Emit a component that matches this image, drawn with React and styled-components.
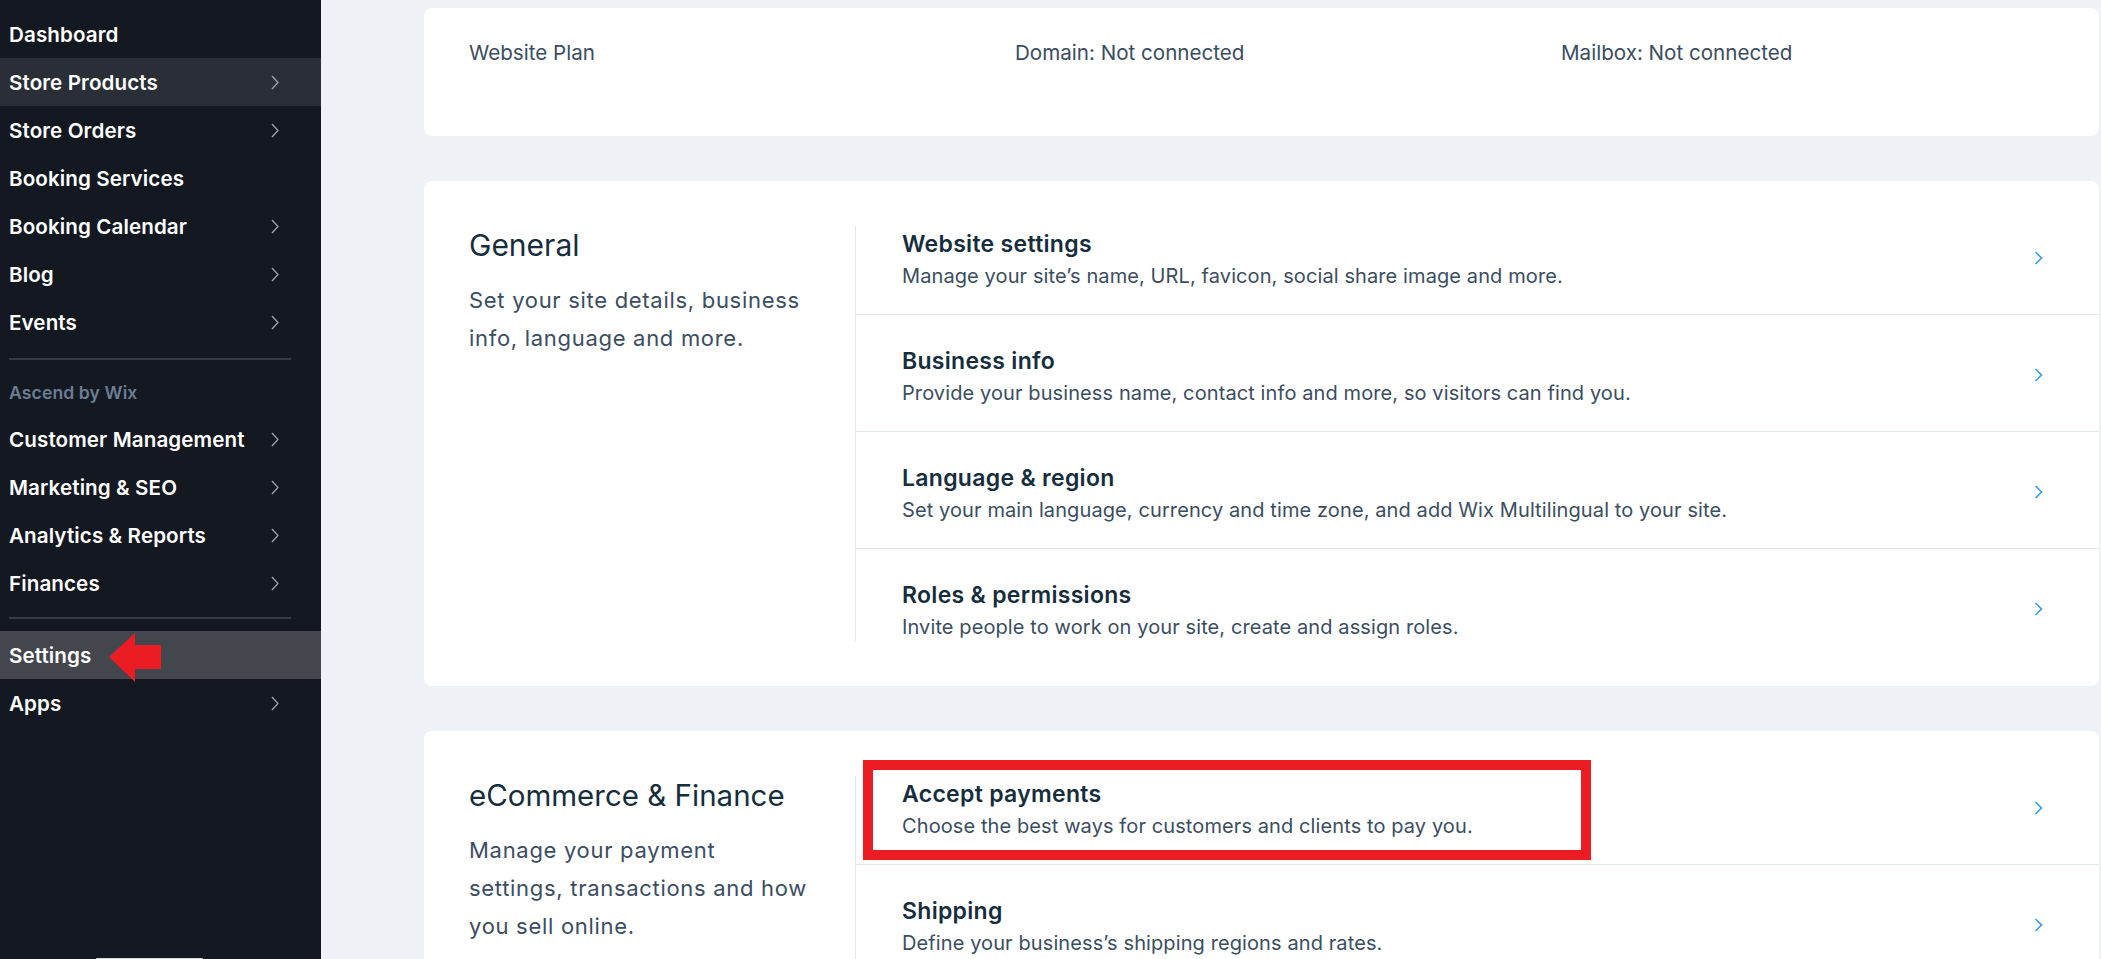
import React from "react";
import styled, { createGlobalStyle } from "styled-components";

const GlobalStyle = createGlobalStyle`
  html, body {
    margin: 0;
    padding: 0;
    height: 100%;
    overflow: hidden;
  }
  body {
    font-family: Inter, "Noto Sans", "Liberation Sans", sans-serif;
    -webkit-font-smoothing: antialiased;
  }
  #root {
    height: 100%;
  }
`;

const Page = styled.div`
  display: flex;
  height: 100vh;
  background-color: #eef2f6;
  overflow: hidden;
`;

const Sidebar = styled.nav`
  display: flex;
  flex-direction: column;
  flex: 0 0 321px;
  background-color: #141821;
  padding-top: 10px;
  box-sizing: border-box;
  overflow: hidden;
`;

const NavItem = styled.div`
  position: relative;
  display: flex;
  align-items: center;
  justify-content: space-between;
  height: 48px;
  padding: 0 42px 0 9px;
  color: #fff;
  font-size: 20.6px;
  letter-spacing: 0.1px;
  font-weight: 600;
  white-space: nowrap;
  background-color: ${(p) =>
    p.$selected ? "#43464d" : p.$hover ? "#2a2e37" : "transparent"};
`;

const NavDivider = styled.div`
  height: 2px;
  margin: ${(p) => p.$margin};
  width: 282px;
  margin-left: 9px;
  background-color: #363a43;
`;

const NavLabel = styled.div`
  padding: 20px 9px 9px;
  line-height: 26px;
  font-size: 17.6px;
  letter-spacing: 0.1px;
  font-weight: 600;
  color: #6b7e94;
`;

const BottomPill = styled.div`
  margin: auto 0 0 96px;
  width: 107px;
  height: 1px;
  border-radius: 6px 6px 0 0;
  background-color: #d9d9d9;
`;

const Arrow = styled.svg`
  position: absolute;
  left: 109px;
  top: 2px;
`;

const Main = styled.main`
  flex: 1;
  display: flex;
  flex-direction: column;
  gap: 45px;
  padding: 8px 2px 0 103px;
  min-width: 0;
`;

const PlanCard = styled.section`
  display: grid;
  grid-template-columns: 546px 546px 1fr;
  align-items: start;
  min-height: 128px;
  box-sizing: border-box;
  padding: 32px 45px;
  background-color: #fff;
  border-radius: 8px;
`;

const PlanText = styled.div`
  font-size: 20.6px;
  line-height: 26px;
  color: #3b4d60;
`;

const Card = styled.section`
  display: flex;
  flex-shrink: 0;
  padding: 45px 0 45px 45px;
  background-color: #fff;
  border-radius: 8px;
`;

const SectionInfo = styled.div`
  flex: 0 0 386px;
`;

const SectionTitle = styled.h2`
  margin: 0;
  font-size: ${(p) => p.$size || "30px"};
  line-height: 38px;
  font-weight: 400;
  color: #162d3d;
`;

const SectionText = styled.p`
  margin: 17px 0 0;
  font-size: 22px;
  letter-spacing: 0.7px;
  line-height: 38px;
  color: #3b4d60;
  white-space: nowrap;
`;

const RowList = styled.div`
  flex: 1;
  border-left: 1px solid #dfe5eb;
`;

const Row = styled.div`
  position: relative;
  display: flex;
  align-items: center;
  padding: 28px 0 24px 46px;
  border-bottom: 1px solid #dfe5eb;

  &:first-child {
    padding-top: 0;
  }
  &:last-child {
    padding-bottom: 0;
    border-bottom: none;
  }
`;

const RowText = styled.div`
  flex: 1;
`;

const RowTitle = styled.div`
  font-size: 23px;
  letter-spacing: 0.3px;
  line-height: 36px;
  font-weight: 600;
  color: #162d3d;
`;

const RowDesc = styled.div`
  font-size: 20px;
  letter-spacing: 0.1px;
  line-height: 28px;
  color: #3b4d60;
`;

const RowChevron = styled.svg`
  flex-shrink: 0;
  margin-right: 56px;
`;

const Highlight = styled.div`
  position: absolute;
  left: 7px;
  top: -16px;
  width: 728px;
  height: 100px;
  box-sizing: border-box;
  border: 10px solid #ec1c24;
  pointer-events: none;
`;

const NavChevron = () => (
  <svg width="8" height="15" viewBox="0 0 8 15">
    <path d="M1 1l6 6.5L1 14" fill="none" stroke="#9da1a9" strokeWidth="1.3" />
  </svg>
);

const BlueChevron = () => (
  <RowChevron width="9" height="14" viewBox="0 0 9 14">
    <path d="M1.5 1l6 6-6 6" fill="none" stroke="#3899ec" strokeWidth="1.6" />
  </RowChevron>
);

const topNav = [
  { label: "Dashboard" },
  { label: "Store Products", arrow: true, hover: true },
  { label: "Store Orders", arrow: true },
  { label: "Booking Services" },
  { label: "Booking Calendar", arrow: true },
  { label: "Blog", arrow: true },
  { label: "Events", arrow: true },
];

const ascendNav = [
  "Customer Management",
  "Marketing & SEO",
  "Analytics & Reports",
  "Finances",
];

const general = [
  ["Website settings", "Manage your site’s name, URL, favicon, social share image and more."],
  ["Business info", "Provide your business name, contact info and more, so visitors can find you."],
  ["Language & region", "Set your main language, currency and time zone, and add Wix Multilingual to your site."],
  ["Roles & permissions", "Invite people to work on your site, create and assign roles."],
];

const ecommerce = [
  ["Accept payments", "Choose the best ways for customers and clients to pay you.", true],
  ["Shipping", "Define your business’s shipping regions and rates."],
  ["Taxes", "Set up tax rates and rules for your business."],
];

const SettingsRows = ({ rows }) => (
  <RowList>
    {rows.map(([title, desc, marked]) => (
      <Row key={title}>
        {marked && <Highlight />}
        <RowText>
          <RowTitle>{title}</RowTitle>
          <RowDesc>{desc}</RowDesc>
        </RowText>
        <BlueChevron />
      </Row>
    ))}
  </RowList>
);

export default function App() {
  return (
    <>
      <GlobalStyle />
      <Page>
        <Sidebar>
          {topNav.map((item) => (
            <NavItem key={item.label} $hover={item.hover}>
              {item.label}
              {item.arrow && <NavChevron />}
            </NavItem>
          ))}
          <NavDivider $margin="12px 0 0" />
          <NavLabel>Ascend by Wix</NavLabel>
          {ascendNav.map((label) => (
            <NavItem key={label}>
              {label}
              <NavChevron />
            </NavItem>
          ))}
          <NavDivider $margin="10px 0 12px" />
          <NavItem $selected>
            Settings
            <Arrow width="52" height="50" viewBox="0 0 52 50">
              <polygon points="0,24 26,0 26,12 52,12 52,36 26,36 26,49" fill="#ec1c24" />
            </Arrow>
          </NavItem>
          <NavItem>
            Apps
            <NavChevron />
          </NavItem>
          <BottomPill />
        </Sidebar>
        <Main>
          <PlanCard>
            <PlanText>Website Plan</PlanText>
            <PlanText>Domain: Not connected</PlanText>
            <PlanText>Mailbox: Not connected</PlanText>
          </PlanCard>
          <Card>
            <SectionInfo>
              <SectionTitle>General</SectionTitle>
              <SectionText>
                Set your site details, business
                <br />
                info, language and more.
              </SectionText>
            </SectionInfo>
            <SettingsRows rows={general} />
          </Card>
          <Card>
            <SectionInfo>
              <SectionTitle $size="29.5px">eCommerce &amp; Finance</SectionTitle>
              <SectionText>
                Manage your payment
                <br />
                settings, transactions and how
                <br />
                you sell online.
              </SectionText>
            </SectionInfo>
            <SettingsRows rows={ecommerce} />
          </Card>
        </Main>
      </Page>
    </>
  );
}
